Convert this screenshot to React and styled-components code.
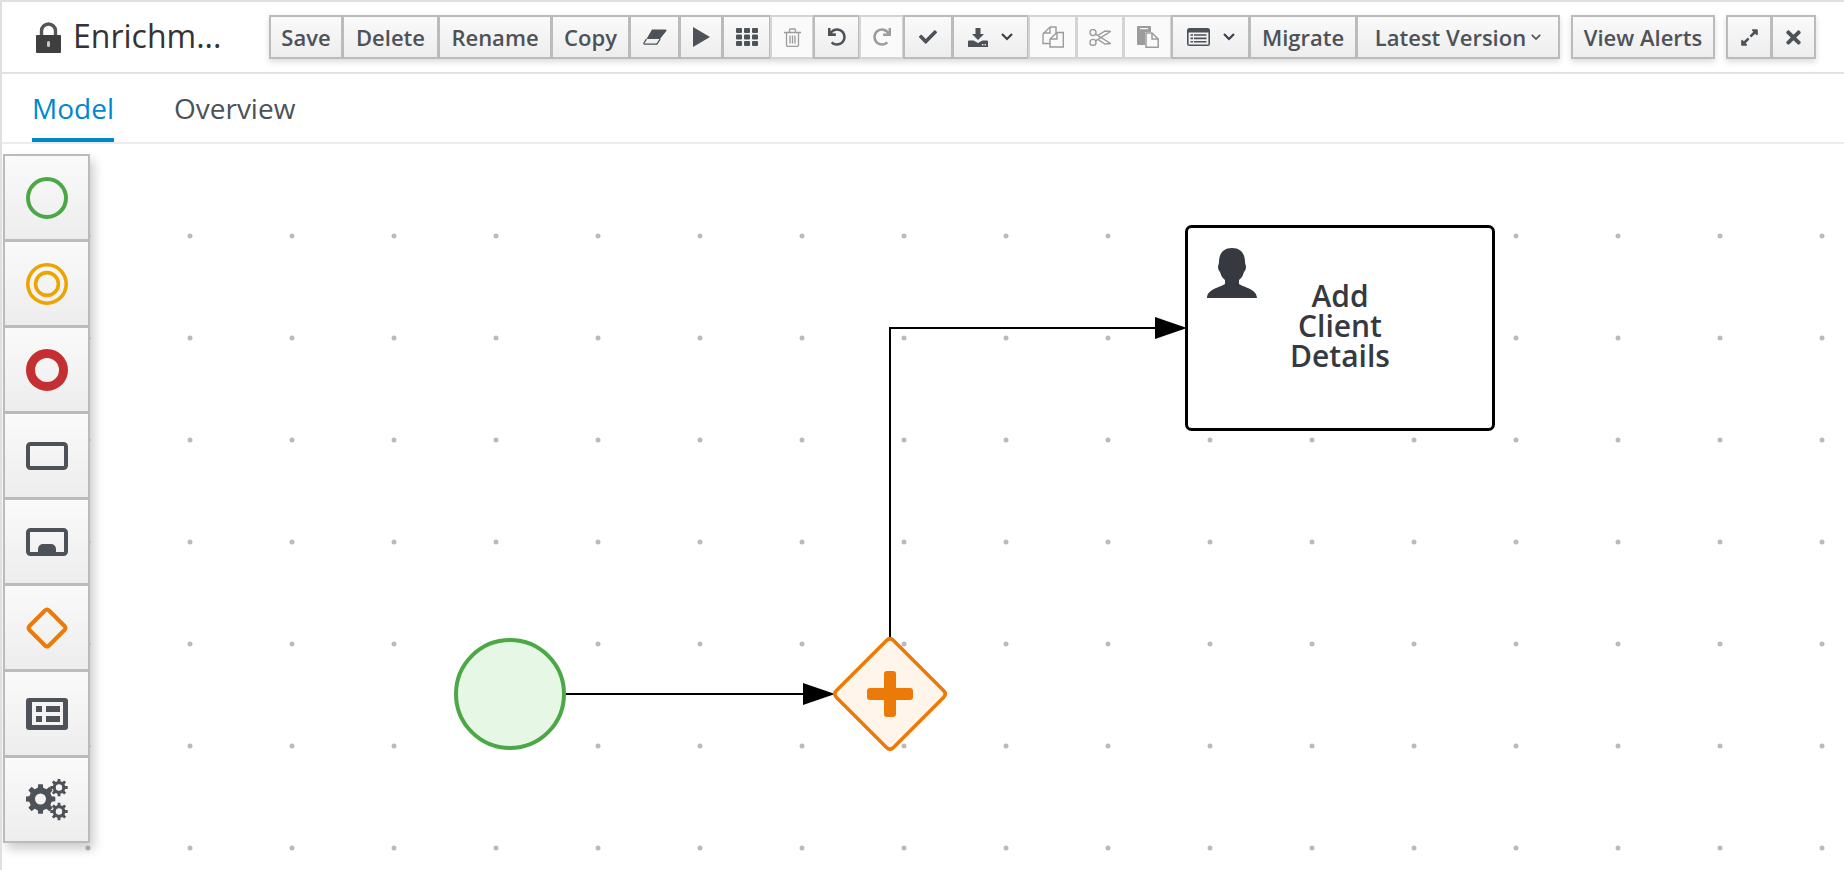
import React from "react";
import styled, { createGlobalStyle } from "styled-components";
import { FaUndo, FaRedo, FaCheck, FaTimes, FaExpandAlt } from "react-icons/fa";

const GlobalStyle = createGlobalStyle`
    html, body {
        margin: 0;
        padding: 0;
        background: #fff;
    }
    body {
        font-family: "Open Sans", "Liberation Sans", sans-serif;
        overflow: hidden;
    }
`;

const DOT_XS = [88, 190, 292, 394, 496, 598, 700, 802, 904, 1006, 1108, 1210, 1312, 1414, 1516, 1618, 1720, 1822];
const DOT_YS = [236, 338, 440, 542, 644, 746, 848];

const LockIcon = () => (
    <svg width="25" height="31" viewBox="0 0 25 31">
        <path d="M5.5 14V9a7 7 0 0 1 14 0v5" fill="none" stroke="#555" strokeWidth="3.4" />
        <rect x="0" y="13" width="25" height="18" rx="1" fill="#3f3f3f" />
        <rect x="11" y="19" width="3" height="6" rx="1.5" fill="#c8c8c8" />
    </svg>
);

const EraserIcon = () => (
    <svg width="24" height="16" viewBox="0 0 24 16">
        <path d="M9 .5h13.5a1 1 0 0 1 .8 1.6L17 10H3.5z" fill="currentColor" />
        <path d="M3.4 10.2L1 14c-.3.6 0 1.2.6 1.2H13c.6 0 1-.3 1.3-.7l2.8-4.3" fill="none" stroke="currentColor" strokeWidth="1.3" />
    </svg>
);

const PlayIcon = () => (
    <svg width="17" height="20" viewBox="0 0 17 20">
        <path d="M0 0L17 10L0 20Z" fill="currentColor" />
    </svg>
);

const GridIcon = () => (
    <svg width="22" height="18" viewBox="0 0 22 18" fill="currentColor">
        {[0, 8, 16].map((x) =>
            [0, 6.5, 13].map((y) => <rect key={`${x}-${y}`} x={x} y={y} width="6" height="5" rx="1" />)
        )}
    </svg>
);

const TrashIcon = () => (
    <svg width="17" height="19" viewBox="0 0 17 19" fill="none" stroke="currentColor" strokeWidth="1.3">
        <path d="M0 4.5h17M5.5 4.5V2a1 1 0 0 1 1-1h4a1 1 0 0 1 1 1v2.5" />
        <path d="M2.5 4.5V17a1.4 1.4 0 0 0 1.4 1.4h9.2a1.4 1.4 0 0 0 1.4-1.4V4.5" />
        <path d="M6 7.5v8M8.5 7.5v8M11 7.5v8" />
    </svg>
);

const DownloadIcon = () => (
    <svg width="20" height="19" viewBox="0 0 20 19" fill="currentColor">
        <path d="M7.5 0h5v6H16l-6 6-6-6h3.5z" />
        <path d="M0 13.5a1 1 0 0 1 1-1h4.5L10 15l4.5-2.5H19a1 1 0 0 1 1 1V19H0z" />
        <rect x="14" y="16" width="1.4" height="1.4" fill="#f2f2f2" />
        <rect x="16.6" y="16" width="1.4" height="1.4" fill="#f2f2f2" />
    </svg>
);

const CopyIcon = () => (
    <svg width="22" height="22" viewBox="0 0 22 22" fill="none" stroke="currentColor" strokeWidth="1.4">
        <path d="M8 1h6v6M8 1L1 8v9.5h7" />
        <path d="M8 1v6H1" />
        <path d="M15 6.5h6.3V21H8v-8z" fill="#fafafa" />
        <path d="M15 6.5V13H8" />
    </svg>
);

const ScissorsIcon = () => (
    <svg width="22" height="17" viewBox="0 0 22 17" fill="none" stroke="currentColor" strokeWidth="1.4">
        <circle cx="4" cy="3.6" r="3" />
        <circle cx="4" cy="13.4" r="3" />
        <path d="M6.6 5.2L21.5 14.5L16 15L9.5 10.8" />
        <path d="M6.6 11.8L21.5 2.5L16 2L9.5 6.2" />
    </svg>
);

const PasteIcon = () => (
    <svg width="22" height="22" viewBox="0 0 22 22">
        <path d="M0 1a1 1 0 0 1 1-1h12a1 1 0 0 1 1 1v5H8v13H1a1 1 0 0 1-1-1z" fill="currentColor" />
        <rect x="3" y="2" width="8" height="1.2" fill="#fafafa" />
        <path d="M9 7h6l6.2 6v8.2H9z" fill="#fafafa" stroke="currentColor" strokeWidth="1.5" />
        <path d="M15 7v6h6.2" fill="none" stroke="currentColor" strokeWidth="1.5" />
    </svg>
);

const TableIcon = () => (
    <svg width="23" height="18" viewBox="0 0 23 18">
        <rect x="0" y="0" width="23" height="18" rx="2.5" fill="currentColor" />
        <rect x="1.6" y="4.5" width="19.8" height="12" fill="#f2f2f2" />
        <path d="M3.5 7h16M3.5 10.4h16M3.5 13.8h16" stroke="currentColor" strokeWidth="1.6" />
        <path d="M6.5 6v9" stroke="#f2f2f2" strokeWidth="0.9" />
    </svg>
);

const Chevron = ({ size = 12, weight = 2.2 }) => (
    <svg width={size} height={size * 0.6} viewBox="0 0 12 7.2" fill="none" stroke="currentColor" strokeWidth={weight}>
        <path d="M1 1l5 5 5-5" />
    </svg>
);

const gearPath = (cx, cy, outer, inner, hole, teeth) => {
    const step = (Math.PI * 2) / teeth;
    const pts = [];
    for (let i = 0; i < teeth; i++) {
        const a = i * step;
        const w = step * 0.2;
        const gap = step * 0.3;
        pts.push([a - gap, inner], [a - w, outer], [a + w, outer], [a + gap, inner]);
    }
    const ring = pts
        .map(([a, r], i) => `${i ? "L" : "M"}${(cx + r * Math.cos(a)).toFixed(2)} ${(cy + r * Math.sin(a)).toFixed(2)}`)
        .join(" ");
    const h = `M${cx + hole} ${cy} a${hole} ${hole} 0 1 0 ${-2 * hole} 0 a${hole} ${hole} 0 1 0 ${2 * hole} 0`;
    return `${ring} Z ${h}`;
};

const toolbarGroups = [
    [
        { label: "Save", w: 74 },
        { label: "Delete", w: 97 },
        { label: "Rename", w: 114 },
        { label: "Copy", w: 79 },
        { icon: <EraserIcon />, w: 51 },
        { icon: <PlayIcon />, w: 44 },
        { icon: <GridIcon />, w: 49 },
        { icon: <TrashIcon />, w: 44, off: true },
        { icon: <FaUndo size={18} />, w: 47 },
        { icon: <FaRedo size={18} />, w: 45, off: true },
        { icon: <FaCheck size={18} />, w: 50 },
        { icon: <DownloadIcon />, caret: true, w: 77 },
        { icon: <CopyIcon />, w: 49, off: true },
        { icon: <ScissorsIcon />, w: 48, off: true },
        { icon: <PasteIcon />, w: 49, off: true },
        { icon: <TableIcon />, caret: true, w: 79 },
        { label: "Migrate", w: 108 },
        { label: "Latest Version", smallCaret: true, w: 204 },
    ],
    [{ label: "View Alerts", w: 144 }],
    [
        { icon: <FaExpandAlt size={19} />, w: 46 },
        { icon: <FaTimes size={21} />, w: 45 },
    ],
];

const Shape = ({ kind }) => {
    const common = { width: 42, height: 42, viewBox: "0 0 42 42", fill: "none" };
    if (kind === "start") {
        return (
            <svg {...common}>
                <circle cx="21" cy="21" r="19" stroke="#4ca846" strokeWidth="4" />
            </svg>
        );
    }
    if (kind === "intermediate") {
        return (
            <svg {...common}>
                <circle cx="21" cy="21" r="19.2" stroke="#eca400" strokeWidth="3.6" />
                <circle cx="21" cy="21" r="11.4" stroke="#eca400" strokeWidth="3.6" />
            </svg>
        );
    }
    if (kind === "end") {
        return (
            <svg {...common}>
                <circle cx="21" cy="21" r="16.5" stroke="#c42f32" strokeWidth="9" />
            </svg>
        );
    }
    if (kind === "task") {
        return (
            <svg {...common}>
                <rect x="2" y="9" width="38" height="24" rx="2.5" stroke="#4d5258" strokeWidth="4" />
            </svg>
        );
    }
    if (kind === "subprocess") {
        return (
            <svg {...common}>
                <rect x="2" y="9" width="38" height="24" rx="2.5" stroke="#4d5258" strokeWidth="4" />
                <path d="M12 33v-5a5 5 0 0 1 5-5h8a5 5 0 0 1 5 5v5z" fill="#4d5258" />
            </svg>
        );
    }
    if (kind === "gateway") {
        return (
            <svg {...common}>
                <path
                    d="M19 3.5 Q21 1.5 23 3.5 L38.5 19 Q40.5 21 38.5 23 L23 38.5 Q21 40.5 19 38.5 L3.5 23 Q1.5 21 3.5 19 Z"
                    stroke="#ec7a08"
                    strokeWidth="4"
                />
            </svg>
        );
    }
    if (kind === "form") {
        return (
            <svg {...common}>
                <rect x="0" y="5" width="42" height="32" rx="3" fill="#4d5258" />
                <rect x="6" y="9" width="31" height="23" fill="#f3f3f3" />
                <rect x="10" y="13" width="6" height="6" fill="#4d5258" />
                <rect x="10" y="23" width="6" height="6" fill="#4d5258" />
                <rect x="20" y="13" width="14" height="6" fill="#4d5258" />
                <rect x="20" y="23" width="14" height="6" fill="#4d5258" />
            </svg>
        );
    }
    return (
        <svg {...common}>
            <path d={gearPath(14.5, 20, 15, 11.5, 5.5, 8)} fill="#4d5258" fillRule="evenodd" />
            <path d={gearPath(33, 8.5, 8.8, 6.4, 3.2, 8)} fill="#4d5258" fillRule="evenodd" />
            <path d={gearPath(33, 32.5, 8.8, 6.4, 3.2, 8)} fill="#4d5258" fillRule="evenodd" />
        </svg>
    );
};

const PALETTE = ["start", "intermediate", "end", "task", "subprocess", "gateway", "form", "settings"];

const Diagram = () => (
    <DiagramSvg viewBox="0 0 1844 725" width="1844" height="725">
        {DOT_YS.map((y) =>
            DOT_XS.map((x) => <circle key={`${x}-${y}`} cx={x} cy={y - 145} r="2.5" fill="#bbb" />)
        )}

        <path d="M566 549 H803" stroke="#000" strokeWidth="2" fill="none" />
        <path d="M803 538 L835 549 L803 560 Z" fill="#000" />
        <path d="M890 495 V183 H1155" stroke="#000" strokeWidth="2" fill="none" />
        <path d="M1155 172 L1187 183 L1155 194 Z" fill="#000" />

        <circle cx="510" cy="549" r="54" fill="#e6f7e5" stroke="#4ca846" strokeWidth="4" />

        <path
            d="M886.5 495.5 Q890 492 893.5 495.5 L943.5 545.5 Q947 549 943.5 552.5 L893.5 602.5 Q890 606 886.5 602.5 L836.5 552.5 Q833 549 836.5 545.5 Z"
            fill="#fff5eb"
            stroke="#ec7a08"
            strokeWidth="3.6"
        />
        <rect x="884" y="526" width="12" height="46" rx="3" fill="#ec7a08" />
        <rect x="867" y="543" width="46" height="12" rx="3" fill="#ec7a08" />

        <rect x="1186.5" y="81.5" width="307" height="203" rx="5" fill="#fff" stroke="#000" strokeWidth="3" />
        <g transform="translate(1207 103)">
            <path
                d="M25 0c9 0 13 6 13 14 0 2 1 3 1 5s-1 4-2 5c-1 3-2 6-5 8v4c4 3 18 5 18 14H0c0-9 14-11 18-14v-4c-3-2-4-5-5-8-1-1-2-3-2-5s1-3 1-5C12 6 16 0 25 0z"
                fill="#363a40"
            />
        </g>
        <TaskLabel>
            <tspan x="1340" y="162">Add</tspan>
            <tspan x="1340" y="192">Client</tspan>
            <tspan x="1340" y="222">Details</tspan>
        </TaskLabel>
    </DiagramSvg>
);

export default function App() {
    return (
        <>
            <GlobalStyle />
            <Page>
                <Header>
                    <Title>
                        <LockIcon />
                        <span>Enrichm...</span>
                    </Title>
                    <Toolbar>
                        {toolbarGroups.map((group, i) => (
                            <BtnGroup key={i}>
                                {group.map((b, j) => (
                                    <Btn key={j} $off={b.off} $w={b.w} $tight={b.smallCaret}>
                                        {b.label}
                                        {b.icon}
                                        {b.caret && (
                                            <CaretColor>
                                                <Chevron />
                                            </CaretColor>
                                        )}
                                        {b.smallCaret && <Chevron size={10} weight={2} />}
                                    </Btn>
                                ))}
                            </BtnGroup>
                        ))}
                    </Toolbar>
                </Header>
                <Tabs>
                    <Tab $active>Model</Tab>
                    <Tab>Overview</Tab>
                </Tabs>
                <Canvas>
                    <Palette>
                        {PALETTE.map((kind) => (
                            <PaletteItem key={kind}>
                                <Shape kind={kind} />
                            </PaletteItem>
                        ))}
                    </Palette>
                    <Diagram />
                </Canvas>
            </Page>
        </>
    );
}

const Page = styled.div`
    width: 1844px;
    height: 870px;
    display: flex;
    flex-direction: column;
    border-top: 2px solid #e0e0e0;
    border-left: 2px solid #e0e0e0;
    box-sizing: border-box;
    overflow: hidden;
`;

const Header = styled.header`
    height: 70px;
    flex: none;
    display: flex;
    align-items: center;
    border-bottom: 2px solid #e2e2e2;
    padding-left: 34px;
`;

const Title = styled.div`
    width: 233px;
    flex: none;
    display: flex;
    align-items: center;
    gap: 12px;
    font-size: 32px;
    color: #333;
    white-space: nowrap;

    span {
        margin-top: -3px;
    }
`;

const Toolbar = styled.div`
    display: flex;
    gap: 11px;
`;

const BtnGroup = styled.div`
    display: flex;
    box-shadow: 0 3px 6px rgba(0, 0, 0, 0.14);
`;

const Btn = styled.div`
    width: ${(p) => p.$w}px;
    height: 44px;
    box-sizing: border-box;
    display: flex;
    align-items: center;
    justify-content: center;
    gap: ${(p) => (p.$tight ? "5px" : "13px")};
    border: 2px solid ${(p) => (p.$off ? "#d4d4d4" : "#bbb")};
    font-size: 22px;
    font-weight: 600;
    white-space: nowrap;
    color: ${(p) => (p.$off ? "#9c9c9c" : "#4d5258")};
    background: ${(p) => (p.$off ? "#fafafa" : "linear-gradient(#fafafa, #ededed)")};

    & + & {
        margin-left: -1px;
    }
`;

const CaretColor = styled.span`
    display: flex;
    color: #39414c;
`;

const Tabs = styled.nav`
    height: 68px;
    flex: none;
    display: flex;
    gap: 60px;
    padding-left: 30px;
    border-bottom: 2px solid #ececec;
`;

const Tab = styled.div`
    height: 68px;
    box-sizing: border-box;
    padding-top: 16px;
    font-size: 28px;
    line-height: 36px;
    color: ${(p) => (p.$active ? "#0088ce" : "#4d5258")};
    border-bottom: ${(p) => (p.$active ? "4px solid #0088ce" : "none")};
`;

const Canvas = styled.main`
    position: relative;
    flex: 1;
`;

const Palette = styled.div`
    position: absolute;
    top: 10px;
    left: 1px;
    z-index: 2;
    width: 87px;
    display: flex;
    flex-direction: column;
    box-shadow: 4px 6px 10px rgba(0, 0, 0, 0.2);
`;

const PaletteItem = styled.div`
    height: 87px;
    box-sizing: border-box;
    display: flex;
    align-items: center;
    justify-content: center;
    border: 2px solid #bbb;
    background: linear-gradient(#fafafa, #ededed);

    & + & {
        margin-top: -1px;
    }
`;

const DiagramSvg = styled.svg`
    position: absolute;
    top: 1px;
    left: -2px;
`;

const TaskLabel = styled.text`
    font-family: "Open Sans", "Liberation Sans", sans-serif;
    font-size: 30px;
    font-weight: 600;
    fill: #363a40;
    text-anchor: middle;
`;
